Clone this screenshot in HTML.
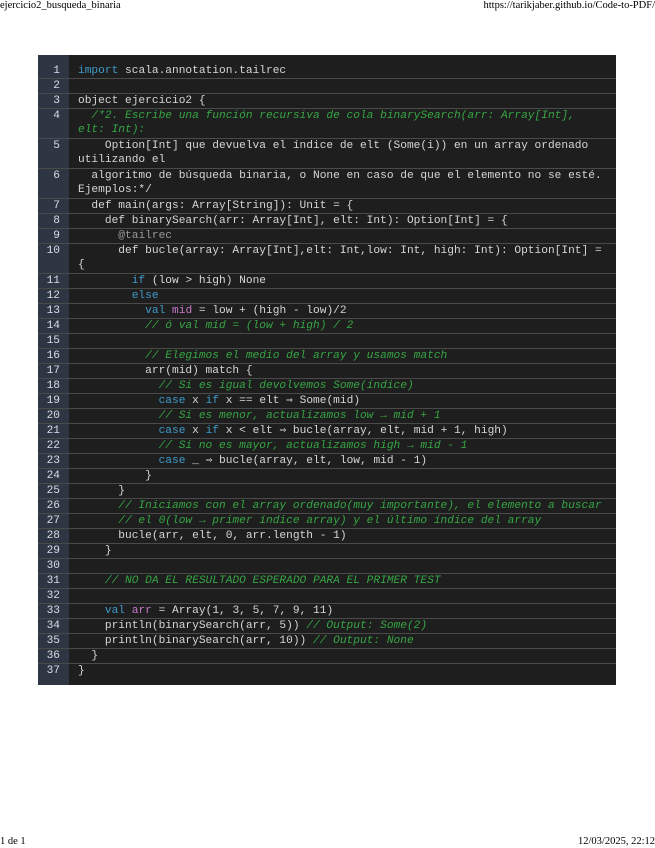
<!DOCTYPE html>
<html><head><meta charset="utf-8"><style>
body{margin:0;width:655px;height:848px;background:#fff;position:relative;overflow:hidden;font-family:"Liberation Serif",serif;}
.hd{position:absolute;font-size:10.5px;color:#000;white-space:nowrap}
#box{position:absolute;left:38px;top:55px;width:578px;height:630px;background:#1e1e1e;}
#gut{position:absolute;left:0;top:0;width:31px;height:630px;background:#2f3643;}
#code{position:absolute;left:0;top:9px;width:578px;font-family:"Liberation Mono",monospace;font-size:11.2px;color:#d6d6d6}
.r{display:flex;border-bottom:1px solid #4a4a4a;line-height:14px;}
.w{padding-bottom:1px}
.n{width:31px;flex:none;color:#d8dde6;box-sizing:border-box;text-align:right;padding-right:9px}
.c{white-space:pre;padding-left:9px}
.k{color:#3f9ac9}.m{color:#36a544;font-style:italic}.p{color:#c678c8}
</style></head><body>
<div class="hd" style="left:0;top:0">ejercicio2_busqueda_binaria</div>
<div class="hd" style="right:0;top:0">https://tarikjaber.github.io/Code-to-PDF/</div>
<div class="hd" style="left:0;top:836px">1 de 1</div>
<div class="hd" style="right:0;top:836px">12/03/2025, 22:12</div>
<div id="box"><div id="gut"></div><div id="code">
<div class="r"><div class="n">1</div><div class="c"><span class="k">import</span> scala.annotation.tailrec</div></div>
<div class="r"><div class="n">2</div><div class="c"> </div></div>
<div class="r"><div class="n">3</div><div class="c">object ejercicio2 {</div></div>
<div class="r w"><div class="n">4</div><div class="c"><span class="m">  /*2. Escribe una función recursiva de cola binarySearch(arr: Array[Int],
elt: Int):</span></div></div>
<div class="r w"><div class="n">5</div><div class="c">    Option[Int] que devuelva el índice de elt (Some(i)) en un array ordenado
utilizando el</div></div>
<div class="r w"><div class="n">6</div><div class="c">  algoritmo de búsqueda binaria, o None en caso de que el elemento no se esté.
Ejemplos:*/</div></div>
<div class="r"><div class="n">7</div><div class="c">  def main(args: Array[String]): Unit = {</div></div>
<div class="r"><div class="n">8</div><div class="c">    def binarySearch(arr: Array[Int], elt: Int): Option[Int] = {</div></div>
<div class="r"><div class="n">9</div><div class="c">      <span style="color:#999">@tailrec</span></div></div>
<div class="r w"><div class="n">10</div><div class="c">      def bucle(array: Array[Int],elt: Int,low: Int, high: Int): Option[Int] =
{</div></div>
<div class="r"><div class="n">11</div><div class="c">        <span class="k">if</span> (low &gt; high) None</div></div>
<div class="r"><div class="n">12</div><div class="c">        <span class="k">else</span></div></div>
<div class="r"><div class="n">13</div><div class="c">          <span class="k">val</span> <span class="p">mid</span> = low + (high - low)/2</div></div>
<div class="r"><div class="n">14</div><div class="c"><span class="m">          // ó val mid = (low + high) / 2</span></div></div>
<div class="r"><div class="n">15</div><div class="c"> </div></div>
<div class="r"><div class="n">16</div><div class="c"><span class="m">          // Elegimos el medio del array y usamos match</span></div></div>
<div class="r"><div class="n">17</div><div class="c">          arr(mid) match {</div></div>
<div class="r"><div class="n">18</div><div class="c"><span class="m">            // Si es igual devolvemos Some(índice)</span></div></div>
<div class="r"><div class="n">19</div><div class="c">            <span class="k">case</span> x <span class="k">if</span> x == elt ⇒ Some(mid)</div></div>
<div class="r"><div class="n">20</div><div class="c"><span class="m">            // Si es menor, actualizamos low → mid + 1</span></div></div>
<div class="r"><div class="n">21</div><div class="c">            <span class="k">case</span> x <span class="k">if</span> x &lt; elt ⇒ bucle(array, elt, mid + 1, high)</div></div>
<div class="r"><div class="n">22</div><div class="c"><span class="m">            // Si no es mayor, actualizamos high → mid - 1</span></div></div>
<div class="r"><div class="n">23</div><div class="c">            <span class="k">case</span> _ ⇒ bucle(array, elt, low, mid - 1)</div></div>
<div class="r"><div class="n">24</div><div class="c">          }</div></div>
<div class="r"><div class="n">25</div><div class="c">      }</div></div>
<div class="r"><div class="n">26</div><div class="c"><span class="m">      // Iniciamos con el array ordenado(muy importante), el elemento a buscar</span></div></div>
<div class="r"><div class="n">27</div><div class="c"><span class="m">      // el 0(low → primer índice array) y el último índice del array</span></div></div>
<div class="r"><div class="n">28</div><div class="c">      bucle(arr, elt, 0, arr.length - 1)</div></div>
<div class="r"><div class="n">29</div><div class="c">    }</div></div>
<div class="r"><div class="n">30</div><div class="c"> </div></div>
<div class="r"><div class="n">31</div><div class="c"><span class="m">    // NO DA EL RESULTADO ESPERADO PARA EL PRIMER TEST</span></div></div>
<div class="r"><div class="n">32</div><div class="c"> </div></div>
<div class="r"><div class="n">33</div><div class="c">    <span class="k">val</span> <span class="p">arr</span> = Array(1, 3, 5, 7, 9, 11)</div></div>
<div class="r"><div class="n">34</div><div class="c">    println(binarySearch(arr, 5)) <span class="m">// Output: Some(2)</span></div></div>
<div class="r"><div class="n">35</div><div class="c">    println(binarySearch(arr, 10)) <span class="m">// Output: None</span></div></div>
<div class="r"><div class="n">36</div><div class="c">  }</div></div>
<div class="r" style="border-bottom:none"><div class="n">37</div><div class="c">}</div></div>
</div></div>
</body></html>
